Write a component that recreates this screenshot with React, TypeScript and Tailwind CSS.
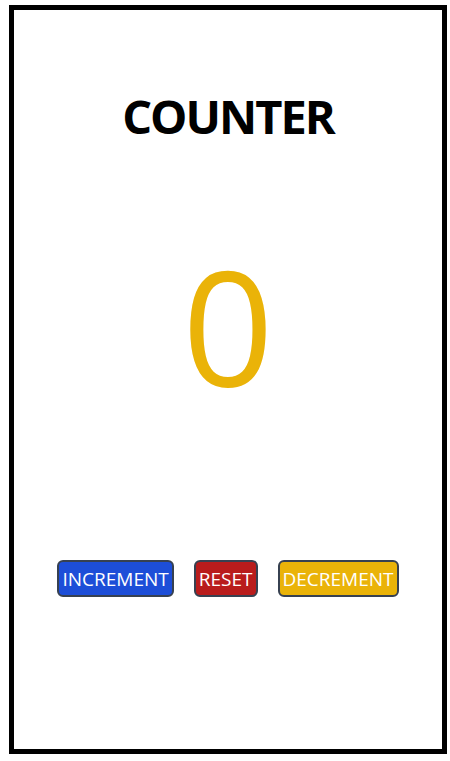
import { useState } from "react";

export default function App() {
  const [count, setCount] = useState(0);

  return (
    <div className="bg-white w-[450px] h-[761px] pt-[5px] pl-[9px]" style={{ fontFamily: '"Open Sans", "Noto Sans", sans-serif' }}>
      <div className="w-[438px] h-[749px] border-[5px] border-black flex flex-col items-center">
        <h1 className="mt-[76px] text-[47px] leading-[60px] font-bold text-black tracking-[-2px]">COUNTER</h1>

        <div className="mt-[98px] text-[160px] leading-[160px] text-[#eab308]">{count}</div>

        <div className="mt-[156px] flex gap-5">
          <button
            onClick={() => setCount(count + 1)}
            className="bg-[#1d4ed8] text-white text-[19px] leading-[29px] px-[3px] pt-[3px] pb-[1px] rounded-md border-2 border-[#374151]"
          >
            INCREMENT
          </button>
          <button
            onClick={() => setCount(0)}
            className="bg-[#b91c1c] text-white text-[19px] leading-[29px] px-[3px] pt-[3px] pb-[1px] rounded-md border-2 border-[#374151]"
          >
            RESET
          </button>
          <button
            onClick={() => setCount(count - 1)}
            className="bg-[#eab308] text-white text-[19px] leading-[29px] px-[3px] pt-[3px] pb-[1px] rounded-md border-2 border-[#374151]"
          >
            DECREMENT
          </button>
        </div>
      </div>
    </div>
  );
}
